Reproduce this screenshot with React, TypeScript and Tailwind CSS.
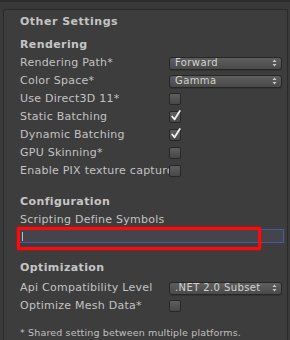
import React from 'react';

const font = { fontFamily: '"DejaVu Sans", "Liberation Sans", sans-serif' };

const Arrows: React.FC = () => (
  <svg width="5" height="8" viewBox="0 0 5 8" className="shrink-0">
    <path d="M2.5 0.5 L4.5 3 L0.5 3 Z" fill="#c8c8c8" />
    <path d="M2.5 7.5 L4.5 5 L0.5 5 Z" fill="#c8c8c8" />
  </svg>
);

const Dropdown: React.FC<{ value: string }> = ({ value }) => (
  <div className="flex h-[13px] w-[113px] items-center justify-between rounded-[3px] border border-[#262626] bg-gradient-to-b from-[#5e5e5e] to-[#4a4a4a] pl-[5px] pr-[4px] text-[10px] leading-none text-[#d2d2d2] shadow-[0_1px_0_#333]">
    <span className="tracking-[0.4px]">{value}</span>
    <Arrows />
  </div>
);

const Checkbox: React.FC<{ checked?: boolean }> = ({ checked }) => (
  <div className="relative h-[12px] w-[12px] rounded-[2px] border border-[#272727] bg-gradient-to-b from-[#5f5f5f] to-[#474747]">
    {checked && (
      <svg width="12" height="13" viewBox="0 0 12 13" className="absolute -top-[3px] left-[0px]">
        <path d="M2.2 7.5 L4.6 10.3 L9.8 2" stroke="#f2f2f2" strokeWidth="1.8" fill="none" strokeLinecap="round" strokeLinejoin="round" />
      </svg>
    )}
  </div>
);

const Row: React.FC<{ label: string; children?: React.ReactNode }> = ({ label, children }) => (
  <div className="flex h-[18px] items-center">
    <div className="w-[149px] shrink-0 overflow-hidden whitespace-nowrap text-[11px] tracking-[0.25px] text-[#c3c3c3]">{label}</div>
    {children}
  </div>
);

const Header: React.FC<{ title: string; className?: string }> = ({ title, className }) => (
  <div className={`flex h-[18px] items-center text-[11px] font-bold tracking-[0.4px] text-[#c6c6c6] ${className ?? ''}`}>{title}</div>
);

export default function App() {
  return (
    <div className="relative h-[340px] w-[290px] overflow-hidden bg-[#3a3a3a]" style={font}>
      <div className="h-[9px] border-t-[2px] border-[#2c2c2c] bg-[#393939]" />
      <div className="ml-[3px] mr-[2px] h-[331px] rounded-tl-[3px] border-l border-r border-t border-[#2a2a2a] bg-[#3d3d3d] pl-[16px] pt-[2px]">
        <div className="flex h-[20px] items-center text-[11px] font-bold tracking-[0.5px] text-[#c4c4c4]">Other Settings</div>
        <Header title="Rendering" className="mt-[4px]" />
        <Row label="Rendering Path*"><Dropdown value="Forward" /></Row>
        <Row label="Color Space*"><Dropdown value="Gamma" /></Row>
        <Row label="Use Direct3D 11*"><Checkbox /></Row>
        <Row label="Static Batching"><Checkbox checked /></Row>
        <Row label="Dynamic Batching"><Checkbox checked /></Row>
        <Row label="GPU Skinning*"><Checkbox /></Row>
        <Row label="Enable PIX texture capture"><Checkbox /></Row>

        <Header title="Configuration" className="mt-[13px]" />
        <Row label="Scripting Define Symbols" />
        <div className="ml-[-1px] flex h-[14px] w-[265px] items-center border border-[#4c58a6] bg-[#44444c] pl-[2px]">
          <div className="h-[9px] w-px bg-[#bdbdbd]" />
        </div>

        <Header title="Optimization" className="mt-[16px]" />
        <div className="mt-[2px]">
          <Row label="Api Compatibility Level"><Dropdown value=".NET 2.0 Subset" /></Row>
        </div>
        <Row label="Optimize Mesh Data*"><Checkbox /></Row>

        <div className="mt-[9px] flex h-[18px] items-center whitespace-nowrap text-[9.5px] tracking-[0.15px] text-[#c0c0c0]">
          * Shared setting between multiple platforms.
        </div>
      </div>
      <div className="pointer-events-none absolute left-[17px] top-[227px] h-[23px] w-[244px] rounded-[1px] border-[3px] border-[#ff0a0a] shadow-[0_0_2px_#ff0000]" />
    </div>
  );
}
